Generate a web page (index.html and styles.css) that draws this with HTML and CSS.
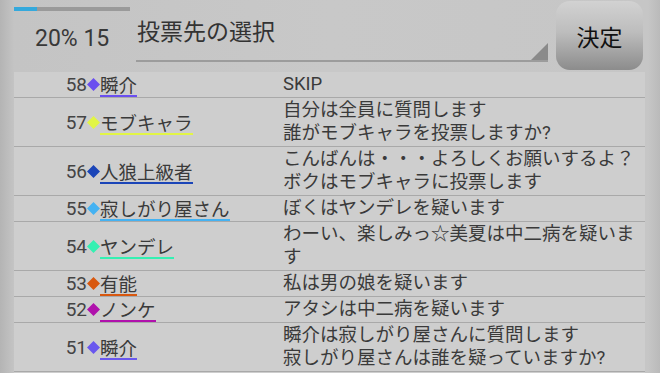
FILE: index.html
```html
<!DOCTYPE html>
<html lang="ja">
<head>
<meta charset="utf-8">
<link rel="stylesheet" href="styles.css">
</head>
<body>
<div class="screen">
  <header class="header">
    <div class="status">
      <div class="progress"><div class="progress-fill" style="width:23px"></div></div>
      <div class="status-text">20% 15</div>
    </div>
    <div class="spinner">
      <span class="spinner-text">投票先の選択</span>
      <svg class="spinner-arrow" width="17" height="17" viewBox="0 0 17 17"><polygon points="0,17 17,17 17,0" fill="#8a8a8a"/></svg>
    </div>
    <button class="decide">決定</button>
  </header>
  <div class="list">
    <div class="row">
      <div class="who"><span class="num">58</span><svg class="dia" width="13" height="13" viewBox="0 0 12 12"><polygon points="6,0 12,6 6,12 0,6" fill="#6a4ff0"/></svg><span class="name" style="border-color:#6a4ff0">瞬介</span></div>
      <div class="msg">SKIP</div>
    </div>
    <div class="row">
      <div class="who"><span class="num">57</span><svg class="dia" width="13" height="13" viewBox="0 0 12 12"><polygon points="6,0 12,6 6,12 0,6" fill="#e2f545"/></svg><span class="name" style="border-color:#e2f545">モブキャラ</span></div>
      <div class="msg">自分は全員に質問します<br>誰がモブキャラを投票しますか?</div>
    </div>
    <div class="row">
      <div class="who"><span class="num">56</span><svg class="dia" width="13" height="13" viewBox="0 0 12 12"><polygon points="6,0 12,6 6,12 0,6" fill="#1b45b8"/></svg><span class="name" style="border-color:#1b45b8">人狼上級者</span></div>
      <div class="msg">こんばんは・・・よろしくお願いするよ？<br>ボクはモブキャラに投票します</div>
    </div>
    <div class="row">
      <div class="who"><span class="num">55</span><svg class="dia" width="13" height="13" viewBox="0 0 12 12"><polygon points="6,0 12,6 6,12 0,6" fill="#45b2f2"/></svg><span class="name" style="border-color:#45b2f2">寂しがり屋さん</span></div>
      <div class="msg">ぼくはヤンデレを疑います</div>
    </div>
    <div class="row">
      <div class="who"><span class="num">54</span><svg class="dia" width="13" height="13" viewBox="0 0 12 12"><polygon points="6,0 12,6 6,12 0,6" fill="#35f0b2"/></svg><span class="name" style="border-color:#35f0b2">ヤンデレ</span></div>
      <div class="msg">わーい、楽しみっ☆美夏は中二病を疑います</div>
    </div>
    <div class="row">
      <div class="who"><span class="num">53</span><svg class="dia" width="13" height="13" viewBox="0 0 12 12"><polygon points="6,0 12,6 6,12 0,6" fill="#d8580f"/></svg><span class="name" style="border-color:#d8580f">有能</span></div>
      <div class="msg">私は男の娘を疑います</div>
    </div>
    <div class="row">
      <div class="who"><span class="num">52</span><svg class="dia" width="13" height="13" viewBox="0 0 12 12"><polygon points="6,0 12,6 6,12 0,6" fill="#b012ac"/></svg><span class="name" style="border-color:#b012ac">ノンケ</span></div>
      <div class="msg">アタシは中二病を疑います</div>
    </div>
    <div class="row">
      <div class="who"><span class="num">51</span><svg class="dia" width="13" height="13" viewBox="0 0 12 12"><polygon points="6,0 12,6 6,12 0,6" fill="#6a58ee"/></svg><span class="name" style="border-color:#6a58ee">瞬介</span></div>
      <div class="msg">瞬介は寂しがり屋さんに質問します<br>寂しがり屋さんは誰を疑っていますか?</div>
    </div>
  </div>
</div>
</body>
</html>
```

FILE: styles.css
```css
html, body {
  margin: 0;
  padding: 0;
}
body {
  width: 660px;
  height: 373px;
  overflow: hidden;
  font-family: Roboto, "Noto Sans CJK JP", sans-serif;
  color: #3a3a3a;
}
.screen {
  width: 660px;
  height: 373px;
  overflow: hidden;
  background: linear-gradient(to right, #b4b4b4 0, #c4c4c4 14px, #c8c8c8 50%, #c6c6c6 648px, #bababa 100%);
}
.header {
  display: flex;
  height: 72px;
  box-sizing: border-box;
}
.status {
  width: 122px;
  padding-left: 14px;
  display: flex;
  flex-direction: column;
}
.progress {
  width: 116px;
  height: 4px;
  margin-top: 7px;
  background: #9a9a9a;
}
.progress-fill {
  height: 100%;
  background: #35a9dc;
}
.status-text {
  font-family: Roboto, sans-serif;
  font-size: 23px;
  line-height: 27px;
  margin-top: 14px;
  padding-left: 21px;
  color: #383838;
}
.spinner {
  width: 412px;
  height: 62px;
  box-sizing: border-box;
  border-bottom: 2px solid #9c9c9c;
  display: flex;
  align-items: flex-start;
  justify-content: space-between;
}
.spinner-text {
  font-family: "Noto Sans CJK JP", sans-serif;
  font-size: 23px;
  line-height: 30px;
  margin-top: 15px;
  padding-left: 1px;
  color: #333;
}
.spinner-arrow {
  align-self: flex-end;
  display: block;
}
.decide {
  margin-left: 8px;
  margin-top: 1px;
  width: 87px;
  height: 69px;
  border: none;
  border-radius: 14px;
  background: linear-gradient(to bottom, #d2d2d2 0%, #bdbdbd 45%, #8c8c8c 100%);
  font-family: "Noto Sans CJK JP", sans-serif;
  font-size: 23px;
  color: #111;
  padding: 0;
}
.list {
  margin-left: 14px;
  width: 631px;
  height: 301px;
  background: #cecece;
}
.row {
  display: grid;
  grid-template-columns: 269px 1fr;
  border-bottom: 1px solid #a9a9a9;
}
.who {
  display: flex;
  align-items: center;
}
.num {
  width: 73px;
  text-align: right;
  font-size: 19px;
  color: #444;
}
.dia {
  display: block;
  margin: 0 0 0 0;
}
.name {
  font-family: "Noto Sans CJK JP", sans-serif;
  font-size: 18.5px;
  line-height: 21px;
  border-bottom: 2px solid;
  color: #3a3a3a;
  margin-top: 2px;
}
.msg {
  font-family: Roboto, "Noto Sans CJK JP", sans-serif;
  font-size: 18.5px;
  line-height: 23px;
  padding: 1px 0;
  color: #3a3a3a;
}
```
